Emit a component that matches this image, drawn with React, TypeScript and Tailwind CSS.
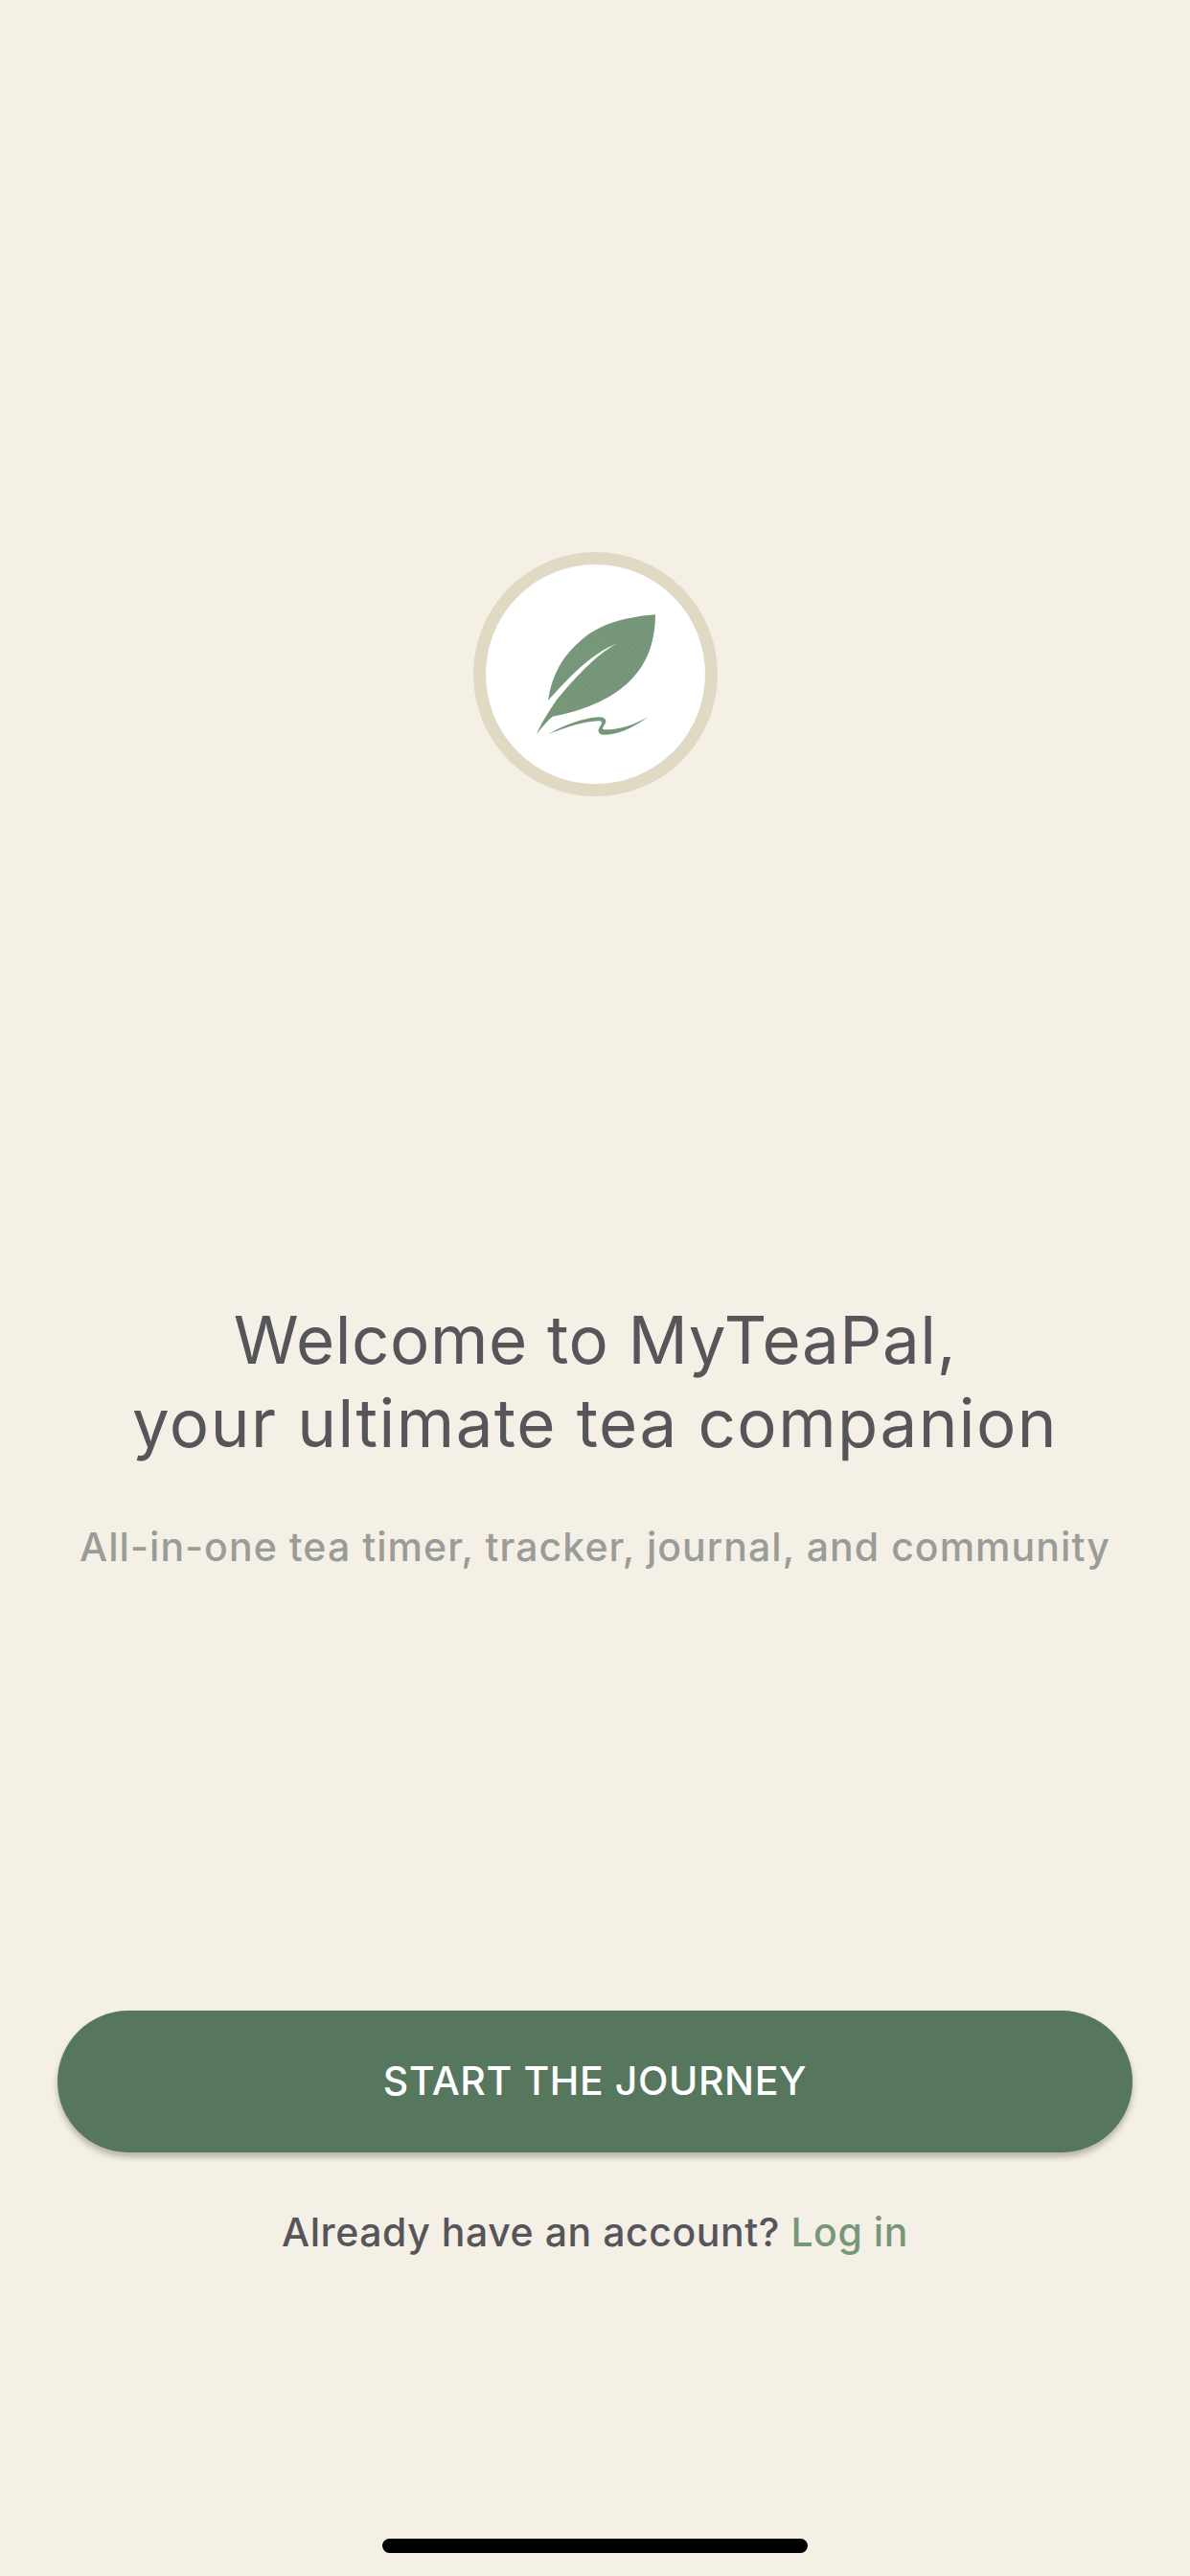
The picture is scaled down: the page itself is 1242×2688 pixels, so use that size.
// MyTeaPal welcome screen
const dots: [number, number][] = [];
for (let row = 0; row < 24; row++) {
  for (let col = 0; col < 30; col++) {
    dots.push([300 + col * 16 + row * 7, 530 + col * -3 + row * -13]);
  }
}

function LeafLogo() {
  return (
    <svg viewBox="78 86 687 687" className="h-full w-full">
      <defs>
        <clipPath id="leaf-body">
          <path d="M596 262C530 268 450 285 400 325C455 318 470 320 490 333C420 375 365 445 325 505C340 520 355 535 372 528C450 505 520 470 560 410C590 365 596 310 596 262Z" />
        </clipPath>
      </defs>
      <path
        fill="#77977a"
        d="M609 243C520 250 440 270 380 320C320 370 285 430 273 512C340 440 400 370 490 333C420 370 350 450 300 510C280 540 255 575 237 617C255 595 270 575 287 562C380 545 470 510 530 450C590 390 608 320 609 243Z"
      />
      <g clipPath="url(#leaf-body)" fill="#5e8264">
        {dots.map(([x, y]) => (
          <circle key={`${x}-${y}`} cx={x} cy={y} r="1.6" />
        ))}
      </g>
      <path
        fill="#77977a"
        d="M273 617C320 592 380 566 430 564C453 563 459 574 450 588C442 600 441 603 452 603C495 603 540 590 586 562C545 595 490 621 445 619C430 618 427 606 435 594C443 582 445 576 430 576C380 578 320 600 273 617Z"
      />
    </svg>
  );
}

export default function App() {
  return (
    <div className="flex h-[2688px] w-[1242px] flex-col items-center bg-[#f4f0e6] font-['Inter','Liberation_Sans',sans-serif]">
      <div className="mt-[576px] h-[255px] w-[255px] rounded-full border-[13px] border-[#e0dac4] bg-white">
        <LeafLogo />
      </div>

      <h1 className="mt-[524px] text-center text-[69px] leading-[87px] font-[375] text-[#55555a]">
        <span className="tracking-[0.6px]">Welcome to MyTeaPal,</span>
        <br />
        <span className="tracking-[1.45px]">your ultimate tea companion</span>
      </h1>
      <p className="mt-[60px] text-center text-[41px] leading-[50px] font-[450] tracking-[1.05px] text-[#9a9c98]">
        All-in-one tea timer, tracker, journal, and community
      </p>

      <button className="mt-[459px] h-[148px] w-[1122px] rounded-full bg-[#56775e] text-[41px] font-medium tracking-[0.6px] text-white shadow-[0_5px_6px_rgba(0,0,0,0.25)]">
        START THE JOURNEY
      </button>
      <p className="mt-[58px] text-center text-[41px] leading-[50px] font-[450] tracking-[0.55px] text-[#55555a]">
        Already have an account? <span className="text-[#77977a]">Log in</span>
      </p>

      <div className="mt-auto mb-[24px] h-[15px] w-[444px] rounded-full bg-black" />
    </div>
  );
}
